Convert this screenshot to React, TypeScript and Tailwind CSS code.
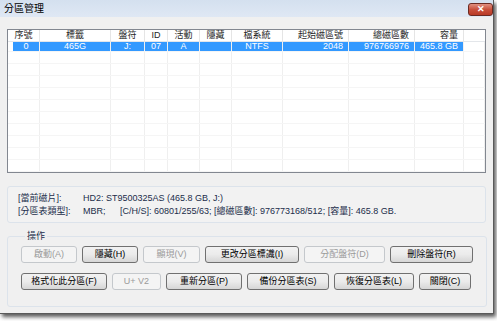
import React from "react";

// ── Datos ─────────────────────────────────────────────────────────────────────

const columnas = [
  { w: "w-[32px]", h: "序號", v: "0", a: "justify-center", pl: "pl-[5px]" },
  { w: "w-[71px]", h: "標籤", v: "465G", a: "justify-center", pl: "" },
  { w: "w-[34px]", h: "盤符", v: "J:", a: "justify-center", pl: "" },
  { w: "w-[23px]", h: "ID", v: "07", a: "justify-center", pl: "" },
  { w: "w-[32px]", h: "活動", v: "A", a: "justify-center", pl: "" },
  { w: "w-[32px]", h: "隱藏", v: "", a: "justify-center", pl: "" },
  { w: "w-[51px]", h: "檔系統", v: "NTFS", a: "justify-center", pl: "" },
  { w: "w-[66px]", h: "起始磁區號", v: "2048", a: "justify-end pr-[5px]", pl: "" },
  { w: "w-[66px]", h: "總磁區數", v: "976766976", a: "justify-end pr-[5px]", pl: "" },
  { w: "w-[49px]", h: "容量", v: "465.8 GB", a: "justify-end pr-[5px]", pl: "" },
];

const fila1 = [
  { t: "啟動(A)", w: "w-[56px]", off: true },
  { t: "隱藏(H)", w: "w-[56px]", off: false },
  { t: "顯現(V)", w: "w-[57px]", off: true },
  { t: "更改分區標識(I)", w: "w-[94px]", off: false },
  { t: "分配盤符(D)", w: "w-[81px]", off: true },
  { t: "刪除盤符(R)", w: "w-[83px]", off: false },
];

const fila2 = [
  { t: "格式化此分區(F)", w: "w-[86px]", off: false },
  { t: "U+ V2", w: "w-[49px]", off: true },
  { t: "重新分區(P)", w: "w-[76px]", off: false },
  { t: "備份分區表(S)", w: "w-[82px]", off: false },
  { t: "恢復分區表(L)", w: "w-[80px]", off: false },
  { t: "關閉(C)", w: "w-[52px]", off: false },
];

const filasVacias = Array.from({ length: 10 }, (_, i) => i);

// ── App ───────────────────────────────────────────────────────────────────────

export default function App() {
  return (
    <div className="w-[497px] h-[321px] bg-white font-['Liberation_Sans','Noto_Sans_CJK_TC',sans-serif] text-[9px] leading-none overflow-hidden">
      <div className="w-[494px] h-[314px] flex flex-col bg-[#f0f0f0] border-r border-b border-[#5a5a5a] shadow-[2px_3px_4px_rgba(0,0,0,0.65)]">
        {/* ── Barra de título ─────────────────────────────────────────────── */}
        <div className="h-[17px] shrink-0 flex justify-between bg-gradient-to-b from-[#d4e0ef] to-[#dfe8f4]">
          <span className="pl-[4px] pt-[4px] text-[10px] text-black">分區管理</span>
          <div className="mt-[3px] w-[25px] h-[13px] rounded-[3px] border border-[#6b2a22] bg-gradient-to-b from-[#e08f80] via-[#c9503c] to-[#b93a26] flex items-center justify-center text-white text-[9px] font-bold">
            ✕
          </div>
        </div>

        {/* ── Contenido ───────────────────────────────────────────────────── */}
        <div className="flex-1 px-[7px] pt-[12px] flex flex-col">
          {/* Lista de particiones */}
          <div className="w-[479px] h-[144px] border border-[#828790] bg-white overflow-hidden flex flex-col">
            <div className="h-[18px] flex border-b border-[#e3e6ea] text-[#1e1e1e]">
              {columnas.map((c) => (
                <div key={c.h} className={`${c.w} h-full flex items-center border-r border-[#e5e5e5] ${c.a}`}>
                  {c.h}
                </div>
              ))}
              <div className="flex-1" />
            </div>
            <div className="h-[12px] flex border-b border-[#f5f5f5]">
              {columnas.map((c) => (
                <div key={c.h} className={`${c.w} h-full border-r border-[#f0f0f0] ${c.pl}`}>
                  <div className={`h-full bg-[#3399ff] text-white flex items-center ${c.a}`}>{c.v}</div>
                </div>
              ))}
              <div className="flex-1 border-r border-[#f0f0f0]" />
            </div>
            {filasVacias.map((i) => (
              <div key={i} className="h-[12px] shrink-0 flex border-b border-[#f5f5f5]">
                {columnas.map((c) => (
                  <div key={c.h} className={`${c.w} h-full border-r border-[#efefef]`} />
                ))}
                <div className="flex-1 border-r border-[#efefef]" />
              </div>
            ))}
          </div>

          {/* Info del disco */}
          <div className="mt-[13px] w-[479px] h-[37px] border border-[#dce3eb] rounded-[3px] bg-[#f2f2f2] pl-[10px] flex flex-col justify-center gap-[4px] text-[#1b2d4a]">
            <div className="flex">
              <span className="w-[65px]">[當前磁片]:</span>
              <span>HD2: ST9500325AS (465.8 GB, J:)</span>
            </div>
            <div className="flex">
              <span className="w-[65px]">[分區表類型]:</span>
              <span className="w-[37px]">MBR;</span>
              <span>[C/H/S]: 60801/255/63; [總磁區數]: 976773168/512; [容量]: 465.8 GB.</span>
            </div>
          </div>

          {/* Operaciones */}
          <fieldset className="mt-[9px] w-[479px] h-[75px] border border-[#dce3eb] rounded-[3px] px-[13px]">
            <legend className="ml-[4px] px-[2px] text-[#1b2d4a]">操作</legend>
            <div className="mt-[5px] flex gap-[5px]">
              {fila1.map((b) => (
                <Boton key={b.t} {...b} />
              ))}
            </div>
            <div className="mt-[10px] flex gap-[5px]">
              {fila2.map((b) => (
                <Boton key={b.t} {...b} />
              ))}
            </div>
          </fieldset>
        </div>
      </div>
    </div>
  );
}

// ── Boton ─────────────────────────────────────────────────────────────────────

function Boton({ t, w, off }: { t: string; w: string; off: boolean }) {
  return off ? (
    <div className={`${w} h-[17px] flex items-center justify-center rounded-[3px] border border-[#c4c8cc] bg-[#f4f4f4] text-[#9a9a9a]`}>
      {t}
    </div>
  ) : (
    <div className={`${w} h-[17px] flex items-center justify-center rounded-[3px] border border-[#707070] bg-gradient-to-b from-[#f2f2f2] via-[#ebebeb] to-[#d6d6d6] text-black`}>
      {t}
    </div>
  );
}
